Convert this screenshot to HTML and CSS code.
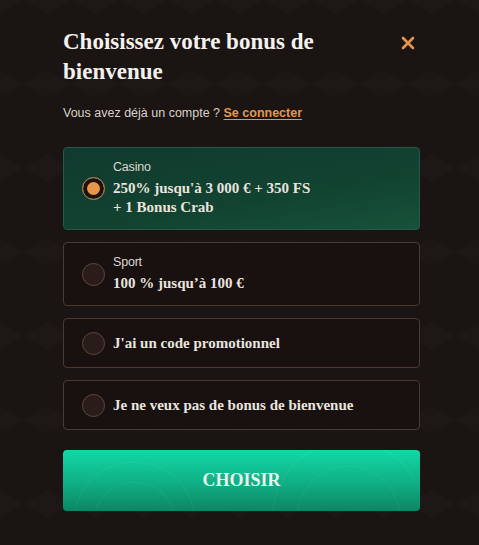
FILE: index.html
```html
<!DOCTYPE html>
<html lang="fr">
<head>
    <meta charset="UTF-8">
    <meta name="viewport" content="width=device-width, initial-scale=1.0">
    <title>Choisissez votre bonus de bienvenue</title>
    <link rel="stylesheet" href="styles.css">
</head>
<body>
    <div class="modal">
        <div class="modal-head">
            <h1>Choisissez votre bonus de bienvenue</h1>
            <button class="close-btn" aria-label="Fermer">
                <svg width="14" height="14" viewBox="0 0 14 14"><path d="M2 2L12 12M12 2L2 12" stroke="#e8954a" stroke-width="2.6" stroke-linecap="round"/></svg>
            </button>
        </div>

        <p class="login">Vous avez déjà un compte ? <a href="#">Se connecter</a></p>

        <!-- Bonus options -->
        <div class="options">
            <label class="option selected">
                <span class="radio"></span>
                <span class="option-text">
                    <span class="kind">Casino</span>
                    <span class="offer">250% jusqu'à 3 000 € + 350 FS<br>+ 1 Bonus Crab</span>
                </span>
            </label>
            <label class="option">
                <span class="radio"></span>
                <span class="option-text">
                    <span class="kind">Sport</span>
                    <span class="offer">100 % jusqu’à 100 €</span>
                </span>
            </label>
            <label class="option single">
                <span class="radio"></span>
                <span class="option-text">
                    <span class="offer">J'ai un code promotionnel</span>
                </span>
            </label>
            <label class="option single">
                <span class="radio"></span>
                <span class="option-text">
                    <span class="offer">Je ne veux pas de bonus de bienvenue</span>
                </span>
            </label>
        </div>

        <button class="choose-btn">CHOISIR</button>
    </div>
</body>
</html>
```

FILE: styles.css
```css
body {
    margin: 0;
    min-height: 545px;
    background-color: #1a1412;
    background-image:
        linear-gradient(30deg, rgba(255,255,255,0.012) 12%, transparent 12.5%, transparent 87%, rgba(255,255,255,0.012) 87.5%),
        linear-gradient(150deg, rgba(255,255,255,0.012) 12%, transparent 12.5%, transparent 87%, rgba(255,255,255,0.012) 87.5%);
    background-size: 48px 84px;
    font-family: "Liberation Serif", serif;
    color: #eee9e4;
}

.modal {
    width: 357px;
    margin: 0 auto;
    padding: 27px 0 0 4px;
}

/* Header */
.modal-head {
    display: flex;
    justify-content: space-between;
    align-items: flex-start;
}
.modal-head h1 {
    margin: 0;
    font-size: 23px;
    line-height: 30px;
    font-weight: bold;
    width: 280px;
    color: #f4f1ee;
}
.close-btn {
    border: none;
    background: none;
    padding: 0;
    margin: 9px 5px 0 0;
    cursor: pointer;
}

.login {
    margin: 19px 0 0;
    font-family: "Liberation Sans", sans-serif;
    font-size: 12.5px;
    color: #d9d2cb;
}
.login a {
    color: #e8954a;
    font-weight: bold;
    text-decoration: underline;
    text-underline-offset: 2px;
}

/* Options */
.options {
    display: flex;
    flex-direction: column;
    gap: 12px;
    margin-top: 27px;
}
.option {
    display: flex;
    align-items: center;
    gap: 8px;
    padding: 0 14px 0 18px;
    min-height: 62px;
    border: 1px solid #4a3b31;
    border-radius: 4px;
    background: #181110;
    cursor: pointer;
}
.option.single { min-height: 48px; }
.option.selected {
    min-height: 81px;
    border-color: #25574a;
    background: linear-gradient(170deg, #103a2e 0%, #124331 60%, #17523a 100%);
}

.radio {
    width: 23px;
    height: 23px;
    flex-shrink: 0;
    border: 1px solid #5e4838;
    border-radius: 50%;
    background: #2a1c1b;
    box-sizing: border-box;
}
.selected .radio {
    border-color: #a07a55;
    background: #e8954a;
    box-shadow: inset 0 0 0 4px #1c120e;
}

.option-text {
    display: flex;
    flex-direction: column;
    gap: 5px;
}
.kind {
    font-family: "Liberation Sans", sans-serif;
    font-size: 12.5px;
    letter-spacing: -0.2px;
    color: #ddd6cf;
}
.offer {
    font-size: 15px;
    font-weight: bold;
    line-height: 19px;
    color: #e9e4de;
}

/* Button */
.choose-btn {
    display: block;
    width: 100%;
    height: 61px;
    margin-top: 20px;
    border: none;
    border-radius: 4px;
    background:
        radial-gradient(circle at 20% 120%, transparent 40px, rgba(255,255,255,0.05) 41px, transparent 42px, transparent 60px, rgba(255,255,255,0.05) 61px, transparent 62px),
        radial-gradient(circle at 80% 110%, transparent 50px, rgba(255,255,255,0.05) 51px, transparent 52px, transparent 75px, rgba(255,255,255,0.05) 76px, transparent 77px),
        linear-gradient(180deg, #13d8a5 0%, #0fae84 55%, #0c8664 100%);
    font-family: "Liberation Serif", serif;
    font-size: 18px;
    font-weight: bold;
    color: #e7f6ef;
    cursor: pointer;
}
```
